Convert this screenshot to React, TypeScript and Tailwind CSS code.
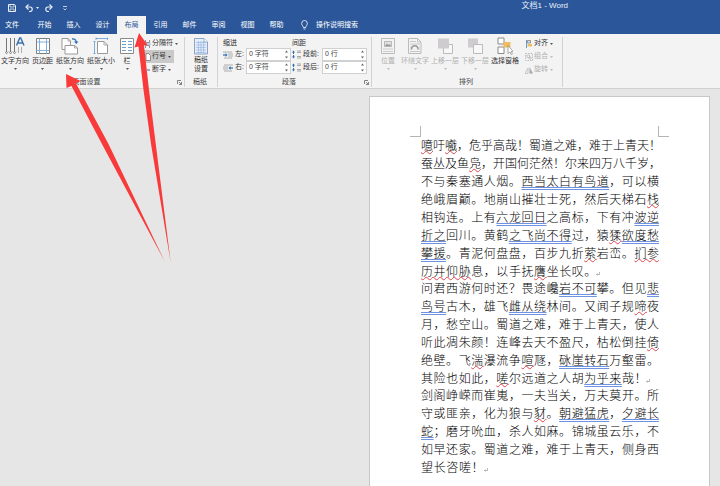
import type { ReactNode } from 'react';
import { clsx } from 'clsx';

const TABS = ['开始', '插入', '设计', '布局', '引用', '邮件', '审阅', '视图', '帮助'];
const ACTIVE_TAB = '布局';

// [..] is a spelling mark (red), {..} is a grammar mark (blue), ↵ ends a paragraph
const POEM = [
    [
        '[噫]吁[嚱]，危乎高哉！蜀道之难，难于上青天！',
        '蚕丛及鱼[凫]，开国何茫然！尔来四万八千岁，',
        '不与秦塞通人烟。{西当太白有鸟道}，可以横',
        '绝峨眉巅。地崩山摧壮士死，然后天梯石[栈]',
        '相钩连。上有{六龙回日}之高标，下有冲{波逆}',
        '{折之}回川。黄鹤{之飞尚不得}过，猿[猱]{欲度愁}',
        '{攀援}。青泥何盘盘，百步九折[萦]岩峦。[扪参]',
        '[历井仰胁]息，以手抚[膺]坐长叹。↵',
    ],
    [
        '问君西游何时还？畏途巉{岩不可}攀。但见{悲}',
        '{鸟号}古木，雄飞{雌从绕}林间。又闻子规[啼]夜',
        '月，愁空山。蜀道之难，难于上青天，使人',
        '听此凋朱颜！连峰去天不盈尺，枯松倒挂[倚]',
        '绝壁。飞[湍]瀑流争[喧]豗，{砯崖转石}万壑雷。',
        '其险也如此，[嗟]尔远道之人胡{为乎来}哉！↵',
    ],
    [
        '剑阁峥嵘而崔嵬，一夫当关，万夫莫开。所',
        '守或匪亲，化为狼与[豺]。{朝避猛虎}，{夕避长}',
        '{蛇}；磨牙吮血，杀人如麻。锦城虽云乐，不',
        '如早还家。蜀道之难，难于上青天，侧身西',
        '望长咨嗟！↵',
    ],
];

const CHARS_PER_LINE = 19;

function Svg({ w, h, children, className }: { w: number; h: number; children: ReactNode; className?: string }) {
    return (
        <svg width={w} height={h} viewBox={`0 0 ${w} ${h}`} fill="none" aria-hidden="true" className={clsx('shrink-0', className)}>
            {children}
        </svg>
    );
}

function Caret({ className }: { className?: string }) {
    return (
        <Svg w={3} h={2} className={className}>
            <path d="M0 0h3L1.5 2z" fill="currentColor" />
        </Svg>
    );
}

/* ---------- ribbon icons ---------- */

function TextDirectionIcon() {
    return (
        <Svg w={20} h={18}>
            <path d="M1.5 1v14M5.5 1v14M9.5 1v14" stroke="#777" />
            <path d="M0 14.5l1.5 2.5L3 14.5M4 14.5l1.5 2.5L7 14.5M8 14.5l1.5 2.5 1.5-2.5" stroke="#777" strokeWidth="0.7" />
            <path d="M13.5 10v6M16.5 10v6" stroke="#999" strokeWidth="0.8" />
            <path d="M11.5 8.5L14.7 1h1L19 8.5M12.8 6h4.8" stroke="#3e72ab" strokeWidth="1.5" />
        </Svg>
    );
}

function MarginsIcon() {
    return (
        <Svg w={14} h={18}>
            <path d="M.5 1.5h13v15H.5z" fill="#fff" stroke="#7d7d7d" />
            <path d="M3.5 1.5v15M10.5 1.5v15M.5 5h13M.5 13.5h13" stroke="#7fb0dc" />
        </Svg>
    );
}

function OrientationIcon() {
    return (
        <Svg w={18} h={18}>
            <path d="M1 1.5h6L9.5 4v8.5H1z" fill="#fff" stroke="#999" />
            <path d="M7 1.5V4h2.5" stroke="#999" strokeWidth="0.8" />
            <path d="M4 8.5h9.5L16.5 11v6H4z" fill="#fff" stroke="#999" />
            <path d="M13.5 8.5V11h3" stroke="#999" strokeWidth="0.8" />
            <path d="M11 2c2.5-.5 4 .8 4.200 3" stroke="#2f6eb0" strokeWidth="1.3" />
            <path d="M13 4.5h4.5L15.200 7z" fill="#2f6eb0" />
        </Svg>
    );
}

function PaperSizeIcon() {
    return (
        <Svg w={16} h={18}>
            <path d="M3 .5v2.500M14.500.500v2.500M3 1.500h11.500M.500 4.500h2M.500 16.500h2M1.500 4.500v12" stroke="#5b9bd0" strokeWidth="0.8" />
            <path d="M4.500 4.500h6.500l3.500 3.500v8.500h-10z" fill="#fff" stroke="#999" />
            <path d="M11 4.500V8h3.500" stroke="#999" strokeWidth="0.8" />
        </Svg>
    );
}

function ColumnsIcon() {
    return (
        <Svg w={14} h={18}>
            <path d="M.5 1.5h13v15H.5z" fill="#fff" stroke="#8a8a8a" />
            <path d="M2 4.5h4M8 4.5h4M2 7.5h4M8 7.5h4M2 10.5h4M8 10.5h4M2 13.5h4M8 13.5h4" stroke="#6d9fd0" />
        </Svg>
    );
}

function ManuscriptIcon() {
    return (
        <Svg w={14} h={18}>
            <path d="M.5 1.5H10L13.500 5v12H.5z" fill="#e4edf9" stroke="#8ba3c7" />
            <path d="M2 5.5h10M2 8h10M2 10.5h10M2 13h10M2 15.5h10M4.5 4v12M7 4v12M9.5 4v12" stroke="#8eaede" strokeWidth="0.6" />
            <path d="M10 1.5V5h3.5" fill="#fff" stroke="#8ba3c7" strokeWidth="0.8" />
        </Svg>
    );
}

function PositionIcon() {
    return (
        <Svg w={14} h={18}>
            <path d="M.5 1.5h13v15H.5z" stroke="#bbb" />
            <path d="M3.5 4.5h7v5h-7z" fill="#e2e2e2" stroke="#aaa" strokeWidth="0.8" />
            <path d="M4 9l2-2.5L7.5 8l1-1L10 9z" fill="#999" />
            <path d="M2 12h10M2 14.5h10" stroke="#c4c4c4" strokeWidth="0.8" />
        </Svg>
    );
}

function WrapTextIcon() {
    return (
        <Svg w={14} h={18}>
            <path d="M.5 1.5h9L13 5v11.5H.5z" stroke="#bbb" />
            <path d="M9.5 1.5V5H13M2 4.5h6M2 7h10M2 14.5h10" stroke="#bbb" strokeWidth="0.8" />
            <path d="M3.5 12.5c0-5 6.500-5 6.500 0" stroke="#999" strokeWidth="1.5" />
            <path d="M2 10h1M11 10h1M2 12h1M11 12h1" stroke="#bbb" strokeWidth="0.8" />
        </Svg>
    );
}

function BringForwardIcon() {
    return (
        <Svg w={16} h={18}>
            <path d="M6.5 7.5h9v9h-9z" fill="#f8f8f8" stroke="#bbb" />
            <path d="M1 1.5h11v10H1z" fill="#cfcccf" />
        </Svg>
    );
}

function SendBackwardIcon() {
    return (
        <Svg w={16} h={18}>
            <path d="M1 1.5h10v9H1z" fill="#cfcccf" />
            <path d="M6.5 7.5h9v9h-9z" fill="#f8f8f8" stroke="#bbb" />
        </Svg>
    );
}

function SelectionPaneIcon() {
    return (
        <Svg w={16} h={18}>
            <path d="M1 1h6v6H1zM1 10h6v6.5H1z" fill="#fff" stroke="#8a8a8a" />
            <path d="M6.5 5h7v5.5h-7z" fill="#f0bd62" />
            <path d="M11 8.5v8l2-1.500 1.200 2.500 1.200-.600-1.200-2.400h2z" fill="#fff" stroke="#777" strokeWidth="0.6" />
        </Svg>
    );
}

function BreaksIcon() {
    return (
        <Svg w={7} h={8}>
            <path d="M1.5 0v2.5h4V0M1.5 8V5.5h4V8" stroke="#777" strokeWidth="0.8" />
            <path d="M0 4h7" stroke="#5b9bd0" strokeWidth="0.8" />
        </Svg>
    );
}

function LineNumbersIcon() {
    return (
        <Svg w={7} h={8}>
            <path d="M2 .5h2.5l2 2v5H2z" fill="#fff" stroke="#777" strokeWidth="0.8" />
            <path d="M.5 1v6" stroke="#2f6eb0" strokeDasharray="1.5 1" />
        </Svg>
    );
}

function HyphenIcon() {
    return (
        <Svg w={7} h={8}>
            <path d="M1 0v3M1 5v3" stroke="#777" strokeWidth="0.8" />
            <path d="M3 4h3" stroke="#2f6eb0" />
        </Svg>
    );
}

function IndentIcon({ flip }: { flip?: boolean }) {
    return (
        <Svg w={10} h={8}>
            <g transform={flip ? 'translate(10 0) scale(-1 1)' : undefined}>
                <path d="M0 1h9M5 3h5M5 5h5M1 7h8" stroke="#999" strokeWidth="0.8" />
                <path d="M0 4h3" stroke="#2f6eb0" strokeWidth="1.2" />
                <path d="M2.5 2l2 2-2 2z" fill="#2f6eb0" />
            </g>
        </Svg>
    );
}

function SpacingIcon() {
    return (
        <Svg w={9} h={9}>
            <path d="M1.5 1v7" stroke="#2f6eb0" strokeDasharray="3 1" />
            <path d="M0 2.5l1.5-2 1.500 2M0 6.500l1.500 2 1.500-2" fill="#2f6eb0" />
            <path d="M5 1h4M5 2.5h4M5 6.5h4M5 8h4" stroke="#888" strokeWidth="0.7" />
        </Svg>
    );
}

function AlignIcon() {
    return (
        <Svg w={8} h={8}>
            <path d="M1.5 0v8" stroke="#5b8fc7" strokeWidth="0.9" />
            <path d="M2.5.5h3V3h-3z" fill="#ddd" stroke="#777" strokeWidth="0.7" />
            <path d="M2.5 4H7v2.5H2.500z" fill="#f0bd62" />
        </Svg>
    );
}

function GroupIcon() {
    return (
        <Svg w={8} h={8}>
            <path d="M.5.5h7v7h-7z" stroke="#b5b5b5" strokeWidth="0.9" strokeDasharray="1.5 1" />
            <path d="M2 2h2.500v2.500H2zM4 4h2v2H4z" stroke="#b5b5b5" strokeWidth="0.7" />
        </Svg>
    );
}

function RotateIcon() {
    return (
        <Svg w={8} h={8}>
            <path d="M0 7.5L3 2v5.500z" stroke="#b5b5b5" strokeWidth="0.7" />
            <path d="M4.5 1v6.500H8z" fill="#a8a8a8" />
        </Svg>
    );
}

/* ---------- ribbon building blocks ---------- */

interface GroupProps {
    title: string;
    launcher?: boolean;
    className?: string;
    children: ReactNode;
}

function RibbonGroup({ title, launcher = false, className, children }: GroupProps) {
    return (
        <section className="flex flex-col border-r border-[#d2d2d2]">
            <div className={clsx('flex h-10 items-start', className)}>{children}</div>
            <div className="flex items-center pr-0.5 leading-[10px]">
                <h2 className={clsx('flex-1 text-center text-[#444]', launcher && 'pr-1')}>{title}</h2>
                {launcher && (
                    <button type="button" aria-label={`${title}设置`}>
                        <Svg w={5} h={5}>
                            <path d="M.5 4V.5H4M2 2l2.500 2.500M4.500 2v2.500H2" stroke="#666" strokeWidth="0.8" />
                        </Svg>
                    </button>
                )}
            </div>
        </section>
    );
}

interface BigButtonProps {
    label: string;
    icon: ReactNode;
    caret?: boolean;
    disabled?: boolean;
}

function BigButton({ label, icon, caret = true, disabled }: BigButtonProps) {
    return (
        <button type="button" disabled={disabled} className="flex flex-col items-center text-[#333] disabled:text-[#b0b0b0]">
            {icon}
            <span className="leading-3 whitespace-nowrap">{label}</span>
            {caret && <Caret className="mt-px opacity-80" />}
        </button>
    );
}

interface SmallButtonProps {
    label: string;
    icon: ReactNode;
    active?: boolean;
    disabled?: boolean;
}

function SmallButton({ label, icon, active, disabled }: SmallButtonProps) {
    return (
        <button
            type="button"
            disabled={disabled}
            className={clsx(
                'flex h-[13px] items-center gap-px pr-[3px] text-[#333] disabled:text-[#b0b0b0]',
                active && 'bg-[#c9c9c9]'
            )}
        >
            {icon}
            <span className="whitespace-nowrap">{label}</span>
            <Caret className="ml-px opacity-80" />
        </button>
    );
}

function SpinField({ id, label, value, icon }: { id: string; label: string; value: string; icon: ReactNode }) {
    return (
        <div className="flex items-center">
            {icon}
            <label htmlFor={id} className="flex-1 px-0.5 whitespace-nowrap text-[#333]">
                {label}
            </label>
            <div className="flex h-[13px] w-[45px] items-center border border-[#d0d0d0] bg-white px-0.5">
                <input id={id} defaultValue={value} className="w-0 flex-1 bg-transparent text-[#444] outline-none" />
                <Svg w={3} h={9}>
                    <path d="M0 2.500h3L1.500.5zM0 6.500h3L1.500 8.500z" fill="#666" />
                </Svg>
            </div>
        </div>
    );
}

/* ---------- document ---------- */

function PoemLine({ text }: { text: string }) {
    const ends = text.endsWith('↵');
    const body = text.replace('↵', '');
    const count = body.replace(/[[\]{}]/g, '').length;
    const parts = body.split(/(\[.*?\]|\{.*?\})/).filter(Boolean);

    return (
        <span className="flex items-center">
            <span
                className="block whitespace-nowrap [text-align-last:justify]"
                style={{ width: `${(Math.min(count, CHARS_PER_LINE) / CHARS_PER_LINE) * 100}%` }}
            >
                {parts.map((part, i) => {
                    const mark = part[0];
                    if (mark !== '[' && mark !== '{') return part;
                    return (
                        <span
                            key={i}
                            className={clsx(
                                'underline decoration-1 [text-decoration-skip-ink:none]',
                                mark === '['
                                    ? 'decoration-[#e0444c] decoration-wavy underline-offset-0'
                                    : 'decoration-[#6f93e0] decoration-double underline-offset-1'
                            )}
                        >
                            {part.slice(1, -1)}
                        </span>
                    );
                })}
            </span>
            {ends && (
                <Svg w={4} h={4} className="mt-1">
                    <path d="M3.500 0v2.500H.5M1.500 1.500l-1 1 1 1" stroke="#999" strokeWidth="0.7" />
                </Svg>
            )}
        </span>
    );
}

function Page() {
    return (
        <article className="w-[341px] border border-[#c8c8c8] bg-white pb-5">
            <div className="flex justify-between px-10 pt-[29px]">
                <div className="size-[11px] border-r border-b border-[#b5b5b5]" />
                <div className="size-[11px] border-b border-l border-[#b5b5b5]" />
            </div>
            <div className="pr-[50px] pl-[51px] font-['Liberation_Serif','Noto_Sans_CJK_SC',serif] text-xs leading-[18px] font-light text-black">
                {POEM.map((lines, i) => (
                    <p key={i} className="-mb-px">
                        {lines.map((line) => (
                            <PoemLine key={line} text={line} />
                        ))}
                    </p>
                ))}
            </div>
        </article>
    );
}

function PointerArrows() {
    return (
        <svg width="180" height="270" viewBox="0 0 180 270" className="pointer-events-none absolute top-0 left-0" aria-hidden="true">
            <path d="M66 74L66.500 88 71.500 86 103 146 164.500 261 108.500 144 76 83.500 80.500 81z" fill="#f83a3a" />
            <path d="M139 33L134.500 47.500 138.500 46.500 143.500 90 151 144 170.700 262.500 155.500 142 149 90 144 45.500 147.500 45z" fill="#f83a3a" />
        </svg>
    );
}

export default function App() {
    return (
        <div className="relative flex min-h-screen flex-col bg-[#e6e6e6] font-['Liberation_Sans','Noto_Sans_CJK_SC',sans-serif] text-[7px]">
            <header className="bg-[#2b579a] text-white">
                <div className="flex h-4 items-center pr-[152px] pl-2 text-[#e8eefa]">
                    <button type="button" aria-label="保存">
                        <Svg w={8} h={8}>
                            <path d="M.5.5h6l1 1v6h-7z" stroke="currentColor" />
                            <path d="M2 .5h4V3H2zM2 7.500V5h4v2.500" stroke="currentColor" strokeWidth="0.8" />
                        </Svg>
                    </button>
                    <button type="button" aria-label="撤消" className="ml-[9px] flex items-center gap-[3px]">
                        <Svg w={8} h={8}>
                            <path d="M1 3h4a2.200 2.200 0 010 4.500H4" stroke="currentColor" strokeWidth="1.2" />
                            <path d="M3.500.5L1 3l2.500 2.500" stroke="currentColor" strokeWidth="1.2" />
                        </Svg>
                        <Caret />
                    </button>
                    <button type="button" aria-label="恢复" className="ml-1.5">
                        <Svg w={8} h={8}>
                            <path d="M7 3H3a2.200 2.200 0 000 4.500h1" stroke="currentColor" strokeWidth="1.2" />
                            <path d="M4.500.5L7 3 4.500 5.500" stroke="currentColor" strokeWidth="1.2" />
                        </Svg>
                    </button>
                    <button type="button" aria-label="自定义快速访问工具栏" className="ml-2.5">
                        <Svg w={4} h={5}>
                            <path d="M0 .5h4M.5 2.500L2 4l1.500-1.500" stroke="currentColor" strokeWidth="0.8" />
                        </Svg>
                    </button>
                    <h1 className="flex-1 self-start text-right text-[8px] leading-3">文档1 - Word</h1>
                </div>
                <nav className="flex h-[18px] items-stretch">
                    <button type="button" className="mr-1.5 w-6">
                        文件
                    </button>
                    {TABS.map((tab) => (
                        <button
                            key={tab}
                            type="button"
                            className={clsx('w-[29px]', tab === ACTIVE_TAB && 'bg-[#f3f3f3] text-[#2b579a]')}
                        >
                            {tab}
                        </button>
                    ))}
                    <button type="button" className="ml-2.5 flex items-center gap-2">
                        <Svg w={7} h={10}>
                            <path d="M2.300 7.500C2.300 6 .7 5.500.7 3.300a2.800 2.800 0 015.600 0C6.300 5.500 4.700 6 4.700 7.500zM2.500 9h2" stroke="currentColor" strokeWidth="0.8" />
                        </Svg>
                        操作说明搜索
                    </button>
                </nav>
            </header>

            <div className="flex border-b border-[#d0d0d0] bg-[#f3f3f3] pt-[3px] pb-px">
                <RibbonGroup title="页面设置" launcher className="gap-[3px] pr-[3px] pl-px">
                    <BigButton label="文字方向" icon={<TextDirectionIcon />} />
                    <BigButton label="页边距" icon={<MarginsIcon />} />
                    <BigButton label="纸张方向" icon={<OrientationIcon />} />
                    <BigButton label="纸张大小" icon={<PaperSizeIcon />} />
                    <div className="pr-[7px] pl-0.5">
                        <BigButton label="栏" icon={<ColumnsIcon />} />
                    </div>
                    <div className="flex flex-col items-start">
                        <SmallButton label="分隔符" icon={<BreaksIcon />} />
                        <SmallButton label="行号" icon={<LineNumbersIcon />} active />
                        <SmallButton label="断字" icon={<HyphenIcon />} />
                    </div>
                </RibbonGroup>

                <RibbonGroup title="稿纸" className="px-2">
                    <button type="button" className="flex flex-col items-center text-[#333]">
                        <ManuscriptIcon />
                        <span className="w-4 leading-[9px]">稿纸设置</span>
                    </button>
                </RibbonGroup>

                <RibbonGroup title="段落" launcher className="gap-px pr-1 pl-[5px]">
                    <div className="flex w-[68px] flex-col">
                        <h3 className="leading-[11px] text-[#333]">缩进</h3>
                        <SpinField id="indent-left" label="左:" value="0 字符" icon={<IndentIcon />} />
                        <SpinField id="indent-right" label="右:" value="0 字符" icon={<IndentIcon flip />} />
                    </div>
                    <div className="flex w-[75px] flex-col">
                        <h3 className="leading-[11px] text-[#333]">间距</h3>
                        <SpinField id="space-before" label="段前:" value="0 行" icon={<SpacingIcon />} />
                        <SpinField id="space-after" label="段后:" value="0 行" icon={<SpacingIcon />} />
                    </div>
                </RibbonGroup>

                <RibbonGroup title="排列" className="gap-0.5 pr-1.5 pl-[9px]">
                    <div className="pr-1">
                        <BigButton label="位置" icon={<PositionIcon />} disabled />
                    </div>
                    <BigButton label="环绕文字" icon={<WrapTextIcon />} disabled />
                    <BigButton label="上移一层" icon={<BringForwardIcon />} disabled />
                    <BigButton label="下移一层" icon={<SendBackwardIcon />} disabled />
                    <BigButton label="选择窗格" icon={<SelectionPaneIcon />} caret={false} />
                    <div className="flex flex-col pl-1">
                        <SmallButton label="对齐" icon={<AlignIcon />} />
                        <SmallButton label="组合" icon={<GroupIcon />} disabled />
                        <SmallButton label="旋转" icon={<RotateIcon />} disabled />
                    </div>
                </RibbonGroup>
            </div>

            <main className="flex flex-1 justify-end pt-[7px] pr-2.5">
                <Page />
            </main>

            <PointerArrows />
        </div>
    );
}
